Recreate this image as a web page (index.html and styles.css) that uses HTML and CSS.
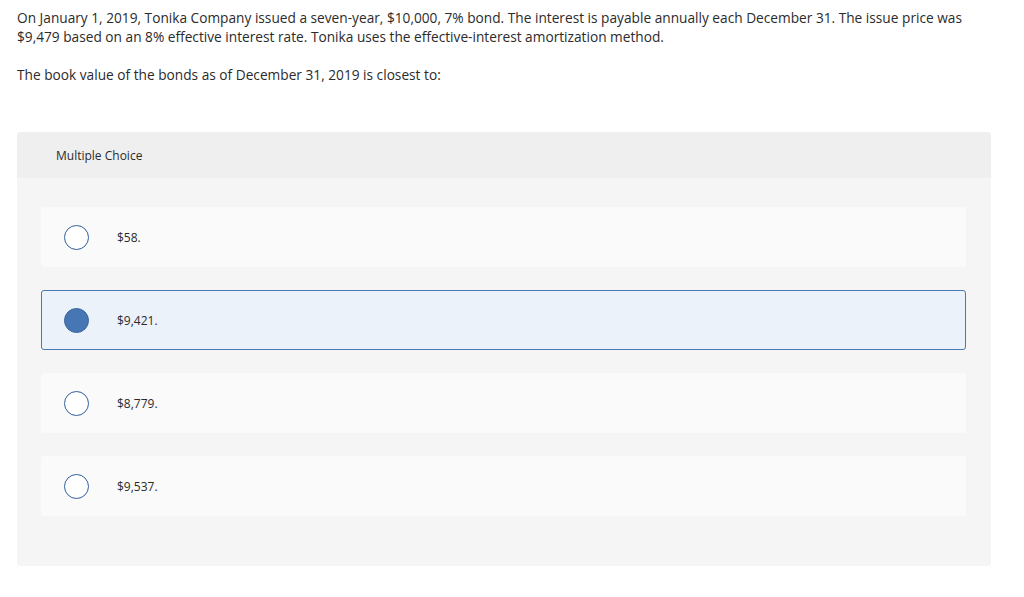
FILE: index.html
```html
<!DOCTYPE html>
<html lang="en">
<head>
<meta charset="utf-8">
<title>Multiple Choice</title>
<link rel="stylesheet" href="styles.css">
</head>
<body>
<div class="page">
  <div class="question">
    <p>On January 1, 2019, Tonika Company issued a seven-year, $10,000, 7% bond. The interest is payable annually each December 31. The issue price was $9,479 based on an 8% effective interest rate. Tonika uses the effective-interest amortization method.</p>
    <p>The book value of the bonds as of December 31, 2019 is closest to:</p>
  </div>
  <div class="mc">
    <div class="mc-header">Multiple Choice</div>
    <div class="mc-body">
      <div class="option"><span class="radio"></span><span class="label">$58.</span></div>
      <div class="option selected"><span class="radio"></span><span class="label">$9,421.</span></div>
      <div class="option"><span class="radio"></span><span class="label">$8,779.</span></div>
      <div class="option"><span class="radio"></span><span class="label">$9,537.</span></div>
    </div>
  </div>
</div>
</body>
</html>
```
FILE: styles.css
```css
html, body {
  margin: 0;
  padding: 0;
  background: #ffffff;
}
body {
  font-family: "Open Sans", "Lato", sans-serif;
  color: #2b2b2b;
}
.page {
  padding: 8px 33px 0 17px;
}
.question p {
  margin: 0 0 19px 0;
  font-size: 13.7px;
  line-height: 19px;
}
.question p:last-child {
  margin-bottom: 0;
}
.mc {
  margin-top: 48px;
  background: #f5f5f5;
  border-radius: 3px;
  overflow: hidden;
}
.mc-header {
  background: #efefef;
  height: 46px;
  display: flex;
  align-items: center;
  padding-left: 39px;
  font-size: 12px;
}
.mc-body {
  padding: 29px 25px 50px 24px;
  display: flex;
  flex-direction: column;
  gap: 23px;
}
.option {
  height: 60px;
  box-sizing: border-box;
  background: #fafafa;
  border-radius: 3px;
  display: flex;
  align-items: center;
  padding-left: 23px;
  font-size: 12px;
}
.option.selected {
  background: #ebf2fa;
  border: 1px solid #4b78b8;
  padding-left: 22px;
}
.radio {
  width: 25px;
  height: 25px;
  box-sizing: border-box;
  border: 1px solid #2f5f9c;
  border-radius: 50%;
  background: #ffffff;
  flex: none;
}
.selected .radio {
  background: #4776b4;
  border-color: #3a659f;
}
.label {
  margin-left: 28px;
}
```
